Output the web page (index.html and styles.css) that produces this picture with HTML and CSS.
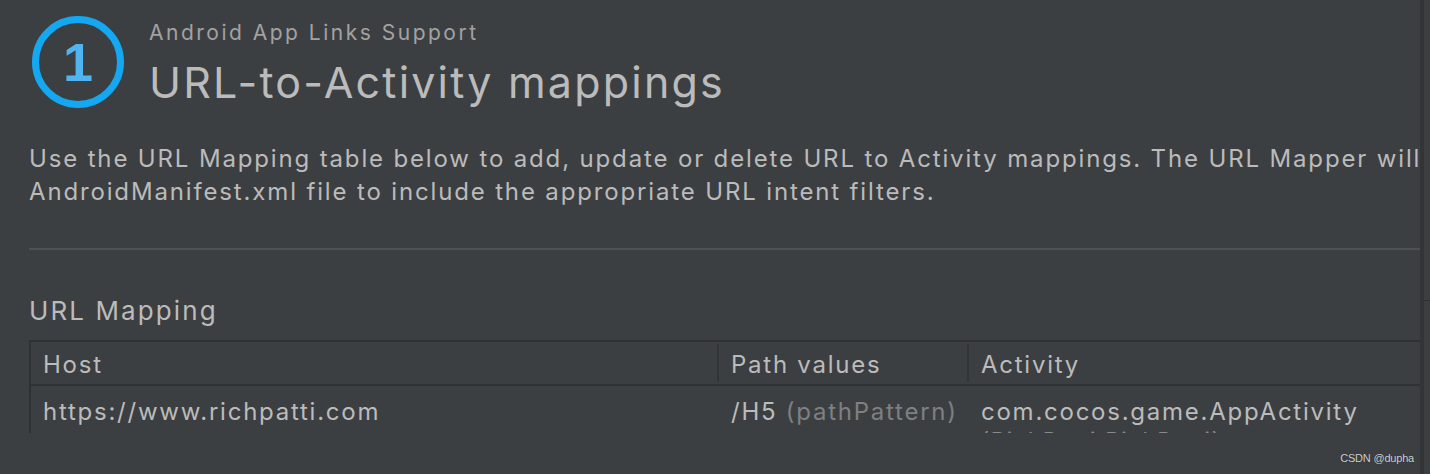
FILE: index.html
```html
<!DOCTYPE html>
<html>
<head>
<meta charset="utf-8">
<link rel="stylesheet" href="styles.css">
</head>
<body>
<div class="page">
  <div class="panel">
    <div class="header">
      <svg class="step" width="92" height="92" viewBox="0 0 92 92">
        <circle cx="46" cy="46" r="42.5" fill="none" stroke="#14a8f2" stroke-width="7"/>
        <text x="46" y="65" text-anchor="middle" class="step-num">1</text>
      </svg>
      <div class="titles">
        <div class="subtitle">Android App Links Support</div>
        <div class="title">URL-to-Activity mappings</div>
      </div>
    </div>
    <p class="desc">Use the URL Mapping table below to add, update or delete URL to Activity mappings. The URL Mapper will update your<br>AndroidManifest.xml file to include the appropriate URL intent filters.</p>
    <div class="sep"></div>
    <div class="section-title">URL Mapping</div>
    <div class="table">
      <div class="row head">
        <div class="cell c-host">Host</div>
        <div class="cell c-path">Path values</div>
        <div class="cell c-act">Activity</div>
      </div>
      <div class="row body">
        <div class="cell c-host">https://www.richpatti.com</div>
        <div class="cell c-path">/H5 <span class="muted">(pathPattern)</span></div>
        <div class="cell c-act">com.cocos.game.AppActivity<div class="sub">(RichPatti.RichPatti)</div></div>
      </div>
    </div>
  </div>
  <div class="divider"></div>
  <div class="side"><div class="side-top"></div></div>
  <div class="watermark">CSDN @dupha</div>
</div>
</body>
</html>
```
FILE: styles.css
```css
html, body {
  margin: 0;
  padding: 0;
  background: #3c3f41;
}
.page {
  position: relative;
  width: 1430px;
  height: 474px;
  display: flex;
  overflow: hidden;
  font-family: Inter, "Liberation Sans", sans-serif;
  color: #bbbbbb;
}
.panel {
  width: 1420px;
  flex: none;
  overflow: hidden;
  padding-left: 29px;
  box-sizing: border-box;
}
.divider {
  width: 4px;
  flex: none;
  background: #323436;
}
.side {
  flex: 1;
  background: #3c3f41;
}
.side-top {
  height: 300px;
  border-bottom: 1px solid #2f3133;
}
.header {
  display: flex;
  align-items: flex-start;
  padding-top: 16px;
  height: 110px;
  box-sizing: border-box;
}
.step {
  margin-left: 3px;
  flex: none;
}
.step-num {
  font-family: "Liberation Sans", Arial, sans-serif;
  font-weight: bold;
  font-size: 54px;
  fill: #4fb4f0;
}
.titles {
  margin-left: 25px;
  margin-top: 2px;
}
.subtitle {
  font-size: 21px;
  line-height: 30px;
  color: #a2a2a2;
  letter-spacing: 2.5px;
}
.title {
  font-size: 43px;
  line-height: 60px;
  margin-top: 4px;
  color: #bbbbbb;
  letter-spacing: 2.2px;
}
.desc {
  margin: 32px 0 0 0;
  font-size: 24px;
  line-height: 33px;
  white-space: nowrap;
  color: #bbbbbb;
  letter-spacing: 1.85px;
}
.sep {
  height: 2px;
  background: #4e5153;
  margin-top: 40px;
}
.section-title {
  margin-top: 45px;
  font-size: 26px;
  line-height: 32px;
  letter-spacing: 2.1px;
}
.table {
  margin-top: 13px;
  border-top: 2px solid #2f3133;
  border-left: 2px solid #2f3133;
}
.row {
  display: flex;
}
.row.head {
  height: 42px;
  border-bottom: 2px solid #2f3133;
  align-items: stretch;
}
.row.body {
  height: 47px;
}
.cell {
  box-sizing: border-box;
  padding-left: 12px;
  font-size: 24px;
  letter-spacing: 1.75px;
  white-space: nowrap;
  overflow: hidden;
}
.head .cell {
  margin: 2px 0;
  line-height: 42px;
}
.head .c-path, .head .c-act {
  border-left: 2px solid #323436;
}
.c-host { width: 686px; }
.c-path { width: 250px; }
.c-act { flex: 1; }
.body .cell {
  padding-top: 11px;
  line-height: 30px;
}
.body .c-path, .body .c-act { padding-left: 14px; }
.muted { color: #7e8082; }
.sub {
  font-size: 22px;
  color: #8a8a8a;
  line-height: 26px;
}
.watermark {
  position: absolute;
  right: 16px;
  bottom: 10px;
  font-family: "Liberation Sans", Arial, sans-serif;
  font-size: 11px;
  letter-spacing: -0.2px;
  color: #d0d0d0;
  text-shadow: 0 0 1px #222;
}
```
